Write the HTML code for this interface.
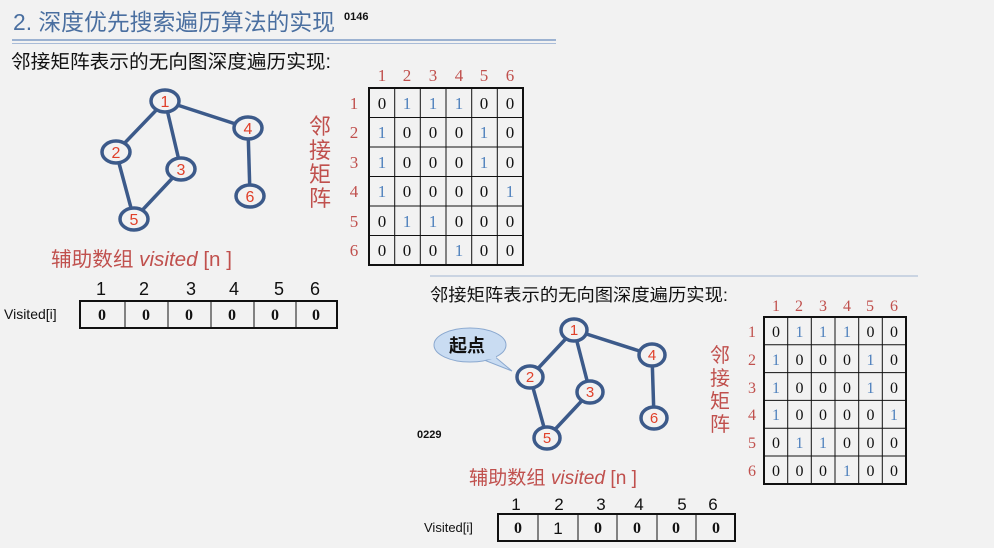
<!DOCTYPE html>
<html><head><meta charset="utf-8"><style>
html,body{margin:0;padding:0;background:#f2f2f2;}
svg{display:block}
.cj{font-family:"Liberation Sans","Noto Sans CJK SC",sans-serif}
.sf{font-family:"Liberation Serif","Noto Serif CJK SC",serif}
</style></head><body>
<svg width="994" height="548" viewBox="0 0 994 548" xmlns="http://www.w3.org/2000/svg">
<rect width="994" height="548" fill="#f2f2f2"/>
<!-- title -->
<text x="13" y="30" class="cj" font-size="23" fill="#4a6fa0" textLength="322" lengthAdjust="spacingAndGlyphs">2. 深度优先搜索遍历算法的实现</text>
<text x="344" y="20" font-family="Liberation Sans" font-weight="bold" font-size="11" fill="#111">0146</text>
<line x1="12" y1="40" x2="556" y2="40" stroke="#7f9cc6" stroke-width="1.5"/>
<line x1="12" y1="43.5" x2="556" y2="43.5" stroke="#a9bcd8" stroke-width="1"/>
<text x="11" y="68" class="cj" font-size="19" fill="#111" textLength="320" lengthAdjust="spacingAndGlyphs">邻接矩阵表示的无向图深度遍历实现:</text>

<!-- graph 1 -->
<g stroke="#3c5a8a" stroke-width="3.5" fill="none">
<line x1="165" y1="101" x2="116" y2="152"/><line x1="165" y1="101" x2="181" y2="169"/>
<line x1="165" y1="101" x2="248" y2="128"/><line x1="116" y1="152" x2="134" y2="219"/>
<line x1="181" y1="169" x2="134" y2="219"/><line x1="248" y1="128" x2="250" y2="196"/>
</g>
<g stroke="#3c5a8a" stroke-width="3.5" fill="#f2f2f2">
<ellipse cx="165" cy="101" rx="14" ry="11"/><ellipse cx="116" cy="152" rx="14" ry="11"/>
<ellipse cx="181" cy="169" rx="14" ry="11"/><ellipse cx="248" cy="128" rx="14" ry="11"/>
<ellipse cx="134" cy="219" rx="14" ry="11"/><ellipse cx="250" cy="196" rx="14" ry="11"/>
</g>
<g font-family="Liberation Sans" font-size="16" fill="#e0402a" text-anchor="middle">
<text x="165" y="107">1</text><text x="116" y="158">2</text><text x="181" y="175">3</text>
<text x="248" y="134">4</text><text x="134" y="225">5</text><text x="250" y="202">6</text>
</g>
<g class="cj" font-size="22" fill="#c0504d" text-anchor="middle">
<text x="320" y="134">邻</text><text x="320" y="158">接</text><text x="320" y="182">矩</text><text x="320" y="206">阵</text>
</g>

<!-- matrix 1 -->
<g class="sf" font-size="17" fill="#c0504d" text-anchor="middle">
<text x="382" y="81">1</text><text x="407" y="81">2</text><text x="433" y="81">3</text><text x="459" y="81">4</text><text x="484" y="81">5</text><text x="510" y="81">6</text>
<text x="354" y="109">1</text><text x="354" y="138">2</text><text x="354" y="168">3</text><text x="354" y="197">4</text><text x="354" y="227">5</text><text x="354" y="256">6</text>
</g>
<g stroke="#111" stroke-width="1">
<rect x="369" y="88" width="154" height="177" fill="none" stroke-width="2"/>
<line x1="394.7" y1="88" x2="394.7" y2="265"/><line x1="420.3" y1="88" x2="420.3" y2="265"/><line x1="446" y1="88" x2="446" y2="265"/><line x1="471.7" y1="88" x2="471.7" y2="265"/><line x1="497.3" y1="88" x2="497.3" y2="265"/>
<line x1="369" y1="117.5" x2="523" y2="117.5"/><line x1="369" y1="147" x2="523" y2="147"/><line x1="369" y1="176.5" x2="523" y2="176.5"/><line x1="369" y1="206" x2="523" y2="206"/><line x1="369" y1="235.5" x2="523" y2="235.5"/>
</g>
<g class="sf" font-size="17" fill="#111" text-anchor="middle">
<text y="109"><tspan x="382">0</tspan><tspan x="407" fill="#4f81bd">1</tspan><tspan x="433" fill="#4f81bd">1</tspan><tspan x="459" fill="#4f81bd">1</tspan><tspan x="484">0</tspan><tspan x="510">0</tspan></text>
<text y="138"><tspan x="382" fill="#4f81bd">1</tspan><tspan x="407">0</tspan><tspan x="433">0</tspan><tspan x="459">0</tspan><tspan x="484" fill="#4f81bd">1</tspan><tspan x="510">0</tspan></text>
<text y="168"><tspan x="382" fill="#4f81bd">1</tspan><tspan x="407">0</tspan><tspan x="433">0</tspan><tspan x="459">0</tspan><tspan x="484" fill="#4f81bd">1</tspan><tspan x="510">0</tspan></text>
<text y="197"><tspan x="382" fill="#4f81bd">1</tspan><tspan x="407">0</tspan><tspan x="433">0</tspan><tspan x="459">0</tspan><tspan x="484">0</tspan><tspan x="510" fill="#4f81bd">1</tspan></text>
<text y="227"><tspan x="382">0</tspan><tspan x="407" fill="#4f81bd">1</tspan><tspan x="433" fill="#4f81bd">1</tspan><tspan x="459">0</tspan><tspan x="484">0</tspan><tspan x="510">0</tspan></text>
<text y="256"><tspan x="382">0</tspan><tspan x="407">0</tspan><tspan x="433">0</tspan><tspan x="459" fill="#4f81bd">1</tspan><tspan x="484">0</tspan><tspan x="510">0</tspan></text>
</g>

<text x="51" y="266" class="cj" font-size="20" fill="#c0504d" textLength="181" lengthAdjust="spacingAndGlyphs">辅助数组 <tspan font-style="italic">visited</tspan> [n ]</text>

<!-- visited 1 -->
<g font-family="Liberation Sans" font-size="18" fill="#111" text-anchor="middle">
<text x="101" y="295">1</text><text x="144" y="295">2</text><text x="191" y="295">3</text><text x="234" y="295">4</text><text x="279" y="295">5</text><text x="315" y="295">6</text>
</g>
<text x="4" y="319" font-family="Liberation Sans" font-size="14" fill="#111">Visited[i]</text>
<g stroke="#111" stroke-width="1">
<rect x="80" y="301" width="257" height="27" fill="none" stroke-width="2"/>
<line x1="125" y1="301" x2="125" y2="328"/><line x1="168" y1="301" x2="168" y2="328"/><line x1="211" y1="301" x2="211" y2="328"/><line x1="254" y1="301" x2="254" y2="328"/><line x1="296" y1="301" x2="296" y2="328"/>
</g>
<g class="sf" font-weight="bold" font-size="16" fill="#111" text-anchor="middle">
<text x="102" y="320">0</text><text x="146" y="320">0</text><text x="189" y="320">0</text><text x="232" y="320">0</text><text x="275" y="320">0</text><text x="316" y="320">0</text>
</g>

<!-- section 2 -->
<line x1="430" y1="276" x2="918" y2="276" stroke="#bcc9dc" stroke-width="1.5"/>
<text x="430" y="301" class="cj" font-size="17.5" fill="#111" textLength="298" lengthAdjust="spacingAndGlyphs">邻接矩阵表示的无向图深度遍历实现:</text>

<!-- callout -->
<path d="M494 356 L512 371 L484 360 Z" fill="#c9dcf2" stroke="#8aa8cf" stroke-width="1"/>
<ellipse cx="470" cy="345" rx="36" ry="17" fill="#c9dcf2" stroke="#8aa8cf" stroke-width="1"/>
<path d="M487 358 L496 357" stroke="#c9dcf2" stroke-width="3"/>
<text x="467" y="352" text-anchor="middle" class="cj" font-size="18" font-weight="bold" fill="#111">起点</text>

<!-- graph 2 -->
<g stroke="#3c5a8a" stroke-width="3.5" fill="none">
<line x1="574" y1="330" x2="530" y2="377"/><line x1="574" y1="330" x2="590" y2="392"/>
<line x1="574" y1="330" x2="652" y2="355"/><line x1="530" y1="377" x2="547" y2="438"/>
<line x1="590" y1="392" x2="547" y2="438"/><line x1="652" y1="355" x2="654" y2="418"/>
</g>
<g stroke="#3c5a8a" stroke-width="3.5" fill="#f2f2f2">
<ellipse cx="574" cy="330" rx="13" ry="11"/><ellipse cx="530" cy="377" rx="13" ry="11"/>
<ellipse cx="590" cy="392" rx="13" ry="11"/><ellipse cx="652" cy="355" rx="13" ry="11"/>
<ellipse cx="547" cy="438" rx="13" ry="11"/><ellipse cx="654" cy="418" rx="13" ry="11"/>
</g>
<g font-family="Liberation Sans" font-size="15" fill="#e0402a" text-anchor="middle">
<text x="574" y="335">1</text><text x="530" y="382">2</text><text x="590" y="397">3</text>
<text x="652" y="360">4</text><text x="547" y="443">5</text><text x="654" y="423">6</text>
</g>
<text x="417" y="438" font-family="Liberation Sans" font-weight="bold" font-size="11" fill="#111">0229</text>
<g class="cj" font-size="20" fill="#c0504d" text-anchor="middle">
<text x="720" y="362">邻</text><text x="720" y="385">接</text><text x="720" y="408">矩</text><text x="720" y="431">阵</text>
</g>

<!-- matrix 2 -->
<g class="sf" font-size="16" fill="#c0504d" text-anchor="middle">
<text x="776" y="311">1</text><text x="799" y="311">2</text><text x="823" y="311">3</text><text x="847" y="311">4</text><text x="870" y="311">5</text><text x="894" y="311">6</text>
<text x="752" y="337">1</text><text x="752" y="365">2</text><text x="752" y="393">3</text><text x="752" y="420">4</text><text x="752" y="448">5</text><text x="752" y="476">6</text>
</g>
<g stroke="#111" stroke-width="1">
<rect x="764" y="317" width="142" height="167" fill="none" stroke-width="2"/>
<line x1="787.7" y1="317" x2="787.7" y2="484"/><line x1="811.3" y1="317" x2="811.3" y2="484"/><line x1="835" y1="317" x2="835" y2="484"/><line x1="858.7" y1="317" x2="858.7" y2="484"/><line x1="882.3" y1="317" x2="882.3" y2="484"/>
<line x1="764" y1="344.8" x2="906" y2="344.8"/><line x1="764" y1="372.6" x2="906" y2="372.6"/><line x1="764" y1="400.4" x2="906" y2="400.4"/><line x1="764" y1="428.2" x2="906" y2="428.2"/><line x1="764" y1="456" x2="906" y2="456"/>
</g>
<g class="sf" font-size="16" fill="#111" text-anchor="middle">
<text y="337"><tspan x="776">0</tspan><tspan x="799.5" fill="#4f81bd">1</tspan><tspan x="823" fill="#4f81bd">1</tspan><tspan x="847" fill="#4f81bd">1</tspan><tspan x="870.5">0</tspan><tspan x="894">0</tspan></text>
<text y="365"><tspan x="776" fill="#4f81bd">1</tspan><tspan x="799.5">0</tspan><tspan x="823">0</tspan><tspan x="847">0</tspan><tspan x="870.5" fill="#4f81bd">1</tspan><tspan x="894">0</tspan></text>
<text y="393"><tspan x="776" fill="#4f81bd">1</tspan><tspan x="799.5">0</tspan><tspan x="823">0</tspan><tspan x="847">0</tspan><tspan x="870.5" fill="#4f81bd">1</tspan><tspan x="894">0</tspan></text>
<text y="420"><tspan x="776" fill="#4f81bd">1</tspan><tspan x="799.5">0</tspan><tspan x="823">0</tspan><tspan x="847">0</tspan><tspan x="870.5">0</tspan><tspan x="894" fill="#4f81bd">1</tspan></text>
<text y="448"><tspan x="776">0</tspan><tspan x="799.5" fill="#4f81bd">1</tspan><tspan x="823" fill="#4f81bd">1</tspan><tspan x="847">0</tspan><tspan x="870.5">0</tspan><tspan x="894">0</tspan></text>
<text y="476"><tspan x="776">0</tspan><tspan x="799.5">0</tspan><tspan x="823">0</tspan><tspan x="847" fill="#4f81bd">1</tspan><tspan x="870.5">0</tspan><tspan x="894">0</tspan></text>
</g>

<text x="469" y="484" class="cj" font-size="19" fill="#c0504d" textLength="168" lengthAdjust="spacingAndGlyphs">辅助数组 <tspan font-style="italic">visited</tspan> [n ]</text>

<!-- visited 2 -->
<g font-family="Liberation Sans" font-size="17" fill="#111" text-anchor="middle">
<text x="516" y="510">1</text><text x="559" y="510">2</text><text x="601" y="510">3</text><text x="639" y="510">4</text><text x="682" y="510">5</text><text x="713" y="510">6</text>
</g>
<text x="424" y="532" font-family="Liberation Sans" font-size="13" fill="#111">Visited[i]</text>
<g stroke="#111" stroke-width="1">
<rect x="498" y="514" width="237" height="27" fill="none" stroke-width="2"/>
<line x1="538" y1="514" x2="538" y2="541"/><line x1="578" y1="514" x2="578" y2="541"/><line x1="617" y1="514" x2="617" y2="541"/><line x1="657" y1="514" x2="657" y2="541"/><line x1="696" y1="514" x2="696" y2="541"/>
</g>
<g class="sf" font-size="16" fill="#111" text-anchor="middle">
<text x="518" y="533" font-weight="bold">0</text><text x="558" y="534" font-family="Liberation Sans" font-size="17">1</text><text x="598" y="533" font-weight="bold">0</text><text x="637" y="533" font-weight="bold">0</text><text x="676" y="533" font-weight="bold">0</text><text x="716" y="533" font-weight="bold">0</text>
</g>
</svg>
</body></html>
